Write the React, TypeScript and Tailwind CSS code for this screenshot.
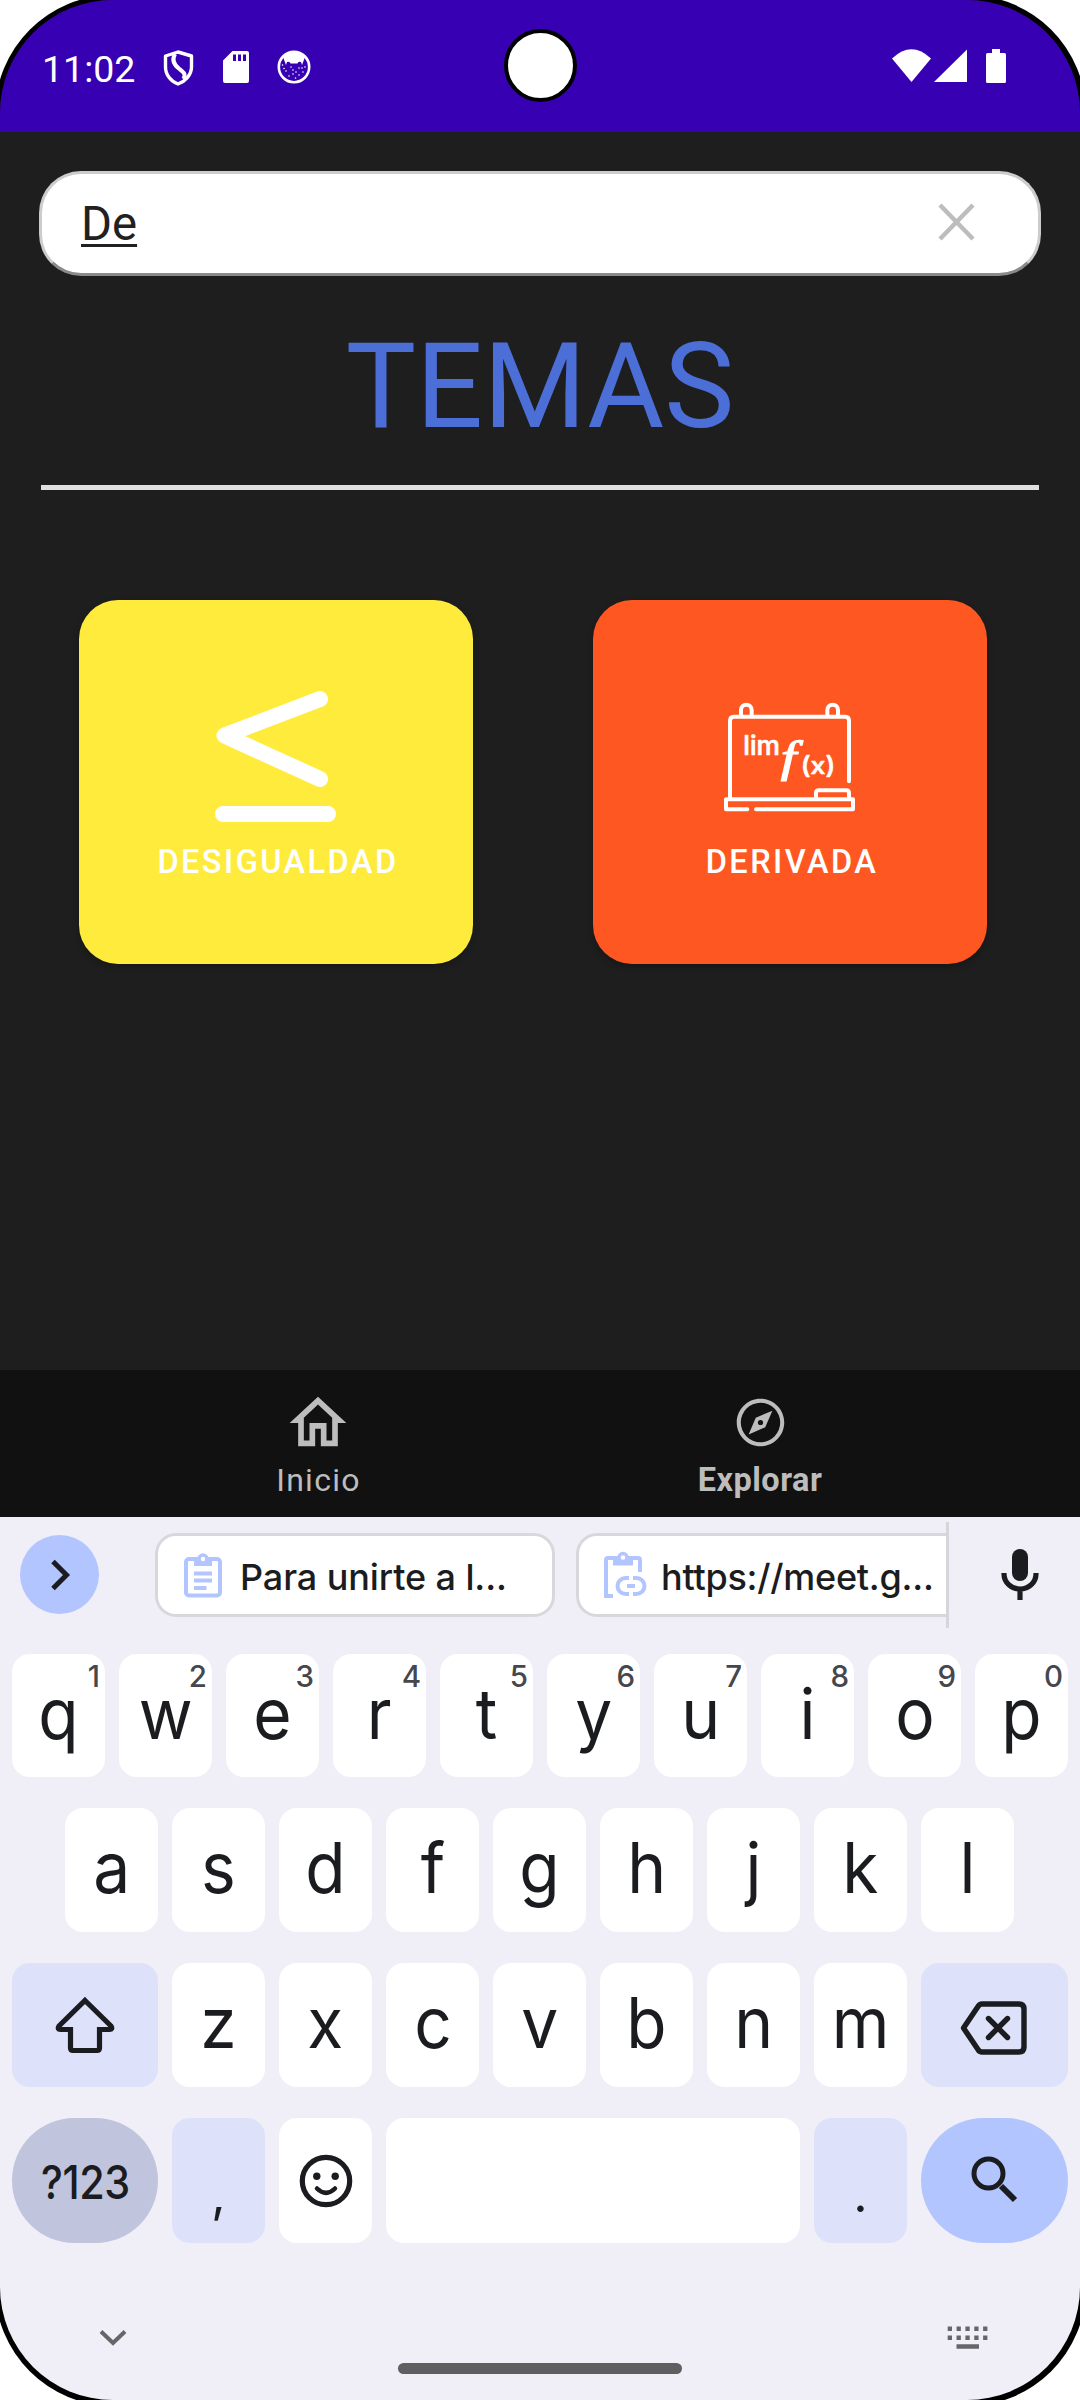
import type { ReactNode } from "react";

function StatusBar() {
  return (
    <header className="relative flex h-[132px] items-center bg-[#3700b3] text-white">
      <span className="ml-[42px] mt-[5px] w-[94px] text-[37.500px] leading-[44px] whitespace-nowrap">11:02</span>
      <svg className="mt-[3px] ml-[26px]" width="32" height="38" viewBox="0 0 32 38" fill="none" stroke="white">
        <path d="M16 3 L29.5 7 V18 C29.5 26 23 32.5 16 35 C9 32.5 3.500 26 3.500 18 V7 Z" strokeWidth="3.4" strokeLinejoin="round" />
        <path d="M13 5 C9.500 11 12 16 17.500 20 C22 23.500 24 25 21.500 30" strokeWidth="4" />
      </svg>
      <svg className="mt-[2px] ml-[29px]" width="26" height="32" viewBox="0 0 26 32" fill="white">
        <path fillRule="evenodd" d="M9.500 0H24a2 2 0 0 1 2 2V30a2 2 0 0 1-2 2H2a2 2 0 0 1-2-2V9.500ZM10 3.500V10H13V3.500ZM15 3.500V10H18V3.500ZM20 3.500V10H23V3.500Z" />
      </svg>
      <svg className="mt-[2px] ml-[28px]" width="34" height="34" viewBox="0 0 34 34">
        <circle cx="17" cy="17" r="15.200" fill="none" stroke="white" strokeWidth="2.600" />
        <path fill="white" d="M6 7 Q17 -3 28 7 L25 15 L24 12 Q21 11 20.500 13.500 H13.500 Q13 11 10 12 L9 15Z" />
        <g fill="white">
          {[[5.500, 15], [9, 21], [14, 17], [19, 22], [25, 18], [28, 17], [12, 26], [16, 24], [22, 25], [26, 22], [7, 18.500], [18.500, 28], [22, 18], [16, 20]].map(([x, y]) => (
            <circle key={`${x}-${y}`} cx={x} cy={y} r="0.800" />
          ))}
        </g>
      </svg>
      <div className="absolute top-[29px] left-[504px] size-[73px] rounded-full border-[4.500px] border-black bg-white" />
      <div className="mr-[74px] ml-auto flex h-[34px] items-start">
        <svg width="39" height="34" viewBox="0 0 39 34" fill="white">
          <path d="M0 9.500 Q19.500 -9 39 9.500 L19.500 33Z" />
        </svg>
        <svg className="ml-[3px]" width="33" height="34" viewBox="0 0 33 34" fill="white">
          <path d="M33 .5V33H0Z" />
        </svg>
        <svg className="ml-[19px]" width="20" height="34" viewBox="0 0 20 34" fill="white">
          <path d="M6 0H14V4H18.500Q20 4 20 5.500V32.500Q20 34 18.500 34H1.500Q0 34 0 32.500V5.500Q0 4 1.500 4H6Z" />
        </svg>
      </div>
    </header>
  );
}

function LessOrEqualIcon() {
  return (
    <svg className="mr-[2px]" width="121" height="131" viewBox="0 0 121 131" fill="none" stroke="white" strokeWidth="16" strokeLinecap="round" strokeLinejoin="round">
      <path d="M105 8 L9.500 44.500 L105 88M8 123H113" />
    </svg>
  );
}

function BoardIcon() {
  return (
    <svg width="132" height="110" viewBox="462 368 396 330" fill="none" stroke="white" strokeWidth="12" strokeLinecap="round" strokeLinejoin="round">
      <path d="M480 657V424Q480 412 492 412H826Q837 412 837 424V606" />
      <path d="M513 408V392a16 16 0 0 1 32 0V408M772 408V392a16 16 0 0 1 32 0V408" />
      <path d="M532 690H468V660H849V690H558" />
      <path d="M738 657V641Q738 633 746 633H829Q837 633 837 641V657" />
      <g fill="white">
        <text x="520" y="528" strokeWidth="2" className="font-['Inter'] text-[80px] font-medium" textLength="110" lengthAdjust="spacingAndGlyphs">lim</text>
        <text x="632" y="578" strokeWidth="3.500" className="font-['Liberation_Serif'] text-[130px] italic" textLength="47" lengthAdjust="spacingAndGlyphs">f</text>
        <text x="692" y="583" strokeWidth="2" className="font-['Inter'] text-[72px] font-medium" textLength="104" lengthAdjust="spacingAndGlyphs">(x)</text>
      </g>
    </svg>
  );
}

function TopicCard({ color, label, children }: { color: string; label: string; children: ReactNode }) {
  return (
    <article className={`flex h-[364px] w-[394px] flex-col items-center rounded-[39px] shadow-[0_3px_6px_rgba(0,0,0,0.25)] ${color}`}>
      <div className="flex h-[222px] w-full items-end justify-center">{children}</div>
      <h2 className="mt-[20px] pl-[4px] text-[32.500px] leading-[40px] font-medium tracking-[2.450px] text-white">{label}</h2>
    </article>
  );
}

function BottomNav() {
  return (
    <nav className="flex h-[147px] justify-between bg-[#111111] px-[258px] text-[#bdbdbd]">
      <div className="flex w-[121px] flex-col items-center">
        <svg className="mt-[18px] mr-[1px]" width="68" height="70" viewBox="0 0 24 24" preserveAspectRatio="none" fill="currentColor">
          <path d="M12 5.690l5 4.500V18h-2v-6H9v6H7v-7.810l5-4.500M12 3L2 12h3v8h6v-6h2v6h6v-8h3L12 3z" />
        </svg>
        <span className="mt-[2px] text-[32px] leading-[40px] tracking-[1.300px]">Inicio</span>
      </div>
      <div className="-mr-[2px] flex w-[128px] flex-col items-center">
        <svg className="mt-[24px]" width="57" height="57" viewBox="0 0 24 24" fill="currentColor">
          <path d="M12 2C6.480 2 2 6.480 2 12s4.480 10 10 10 10-4.480 10-10S17.520 2 12 2zm0 18.300A8.300 8.300 0 1 1 12 3.700a8.300 8.300 0 0 1 0 16.600z" />
          <path fillRule="evenodd" d="M7 17l7-3L17 7 10 10 7 17zm5-6.100a1.100 1.100 0 1 1 0 2.200 1.100 1.100 0 0 1 0-2.200z" />
        </svg>
        <span className="mt-[9px] text-[32.500px] leading-[40px] font-bold tracking-[0.500px] whitespace-nowrap">Explorar</span>
      </div>
    </nav>
  );
}

function ClipboardIcon() {
  return (
    <svg width="38" height="46" viewBox="0 0 38 46" fill="none" stroke="#b3c5ff" strokeWidth="4">
      <rect x="2" y="7" width="34" height="36.500" rx="3" />
      <path d="M10 5.500H28V14H10Z" fill="#b3c5ff" stroke="none" />
      <circle cx="19" cy="7" r="4" fill="white" strokeWidth="3.500" />
      <path d="M10 21.500H28M10 28.500H28M10 36H22.500" />
    </svg>
  );
}

function ClipboardLinkIcon() {
  return (
    <svg width="43" height="48" viewBox="0 0 43 48" fill="none" stroke="#b3c5ff" strokeWidth="4">
      <path d="M9 45H2V9Q2 7 4 7H34Q36 7 36 9V21" />
      <path d="M9 5.500H29V14.500H9Z" fill="#b3c5ff" stroke="none" />
      <circle cx="19" cy="6.500" r="4" fill="white" strokeWidth="3.500" />
      <path d="M25 27H21.500a8 8 0 0 0 0 16H25M29 27h3.500a8 8 0 0 1 0 16H29M23 35H31" />
    </svg>
  );
}

function SuggestionStrip() {
  return (
    <div className="flex h-[137px] items-start">
      <button className="mt-[18px] ml-[20px] flex size-[79px] items-center justify-center rounded-full bg-[#b3c5ff]">
        <svg className="ml-[2px]" width="24" height="32" viewBox="0 0 24 32" fill="none" stroke="#1b1c20" strokeWidth="5">
          <path d="M4 2.500 L17.500 16 L4 29.500" />
        </svg>
      </button>
      <div className="mt-[5px] ml-[56px] flex h-[106px] w-[794px] items-center overflow-hidden border-r-[3px] border-[#d5d5da] text-[#1b1c20]">
        <button className="flex h-[84px] w-[400px] shrink-0 items-center rounded-[21px] border-[3px] border-[#d8d8dc] bg-white pl-[26px]">
          <ClipboardIcon />
          <span className="mt-[4px] ml-[18px] font-['Inter'] text-[36px] font-medium tracking-[-0.100px] whitespace-nowrap">Para unirte a l...</span>
        </button>
        <button className="ml-[21px] flex h-[84px] w-[400px] shrink-0 items-center rounded-[21px] border-[3px] border-[#d8d8dc] bg-white pl-[25px]">
          <ClipboardLinkIcon />
          <span className="mt-[4px] ml-[14px] font-['Inter'] text-[36px] font-medium tracking-[-0.250px] whitespace-nowrap">https://meet.g...</span>
        </button>
      </div>
      <svg className="mt-[32px] ml-[52px]" width="38" height="51" viewBox="0 0 38 51">
        <rect x="11" y="0" width="16" height="32" rx="8" fill="#1b1c20" />
        <path d="M3 24V25a16 15 0 0 0 32 0V24M19 40V51" fill="none" stroke="#1b1c20" strokeWidth="5.200" />
      </svg>
    </div>
  );
}

function LetterKey({ letter, hint }: { letter: string; hint?: string }) {
  return (
    <button className="relative flex w-[93px] shrink-0 items-center justify-center rounded-[18px] bg-white pb-[4px] text-[70px] leading-[80px]">
      <span className="scale-x-[0.94]">{letter}</span>
      {hint && <span className="absolute top-[4px] right-[5px] text-[29.500px] leading-[36px] font-medium text-[#46474c]">{hint}</span>}
    </button>
  );
}

function Keyboard() {
  return (
    <section className="flex h-[883px] flex-col bg-[#f0eff7] font-['Inter'] text-[#1b1c20]">
      <SuggestionStrip />
      <div className="flex flex-col gap-[31px] px-[12px]">
        <div className="flex h-[123px] justify-center gap-[14px]">
          {"qwertyuiop".split("").map((c, i) => (
            <LetterKey key={c} letter={c} hint={String((i + 1) % 10)} />
          ))}
        </div>
        <div className="flex h-[124px] gap-[14px] pl-[53px]">
          {"asdfghjkl".split("").map((c) => (
            <LetterKey key={c} letter={c} />
          ))}
        </div>
        <div className="flex h-[124px] gap-[14px]">
          <button className="flex w-[146px] items-center justify-center rounded-[18px] bg-[#dde1f9]">
            <svg width="60" height="58" viewBox="0 0 60 58" fill="none" stroke="#1b1c20" strokeWidth="5.200">
              <path d="M30 4.500 L56 30 Q58 33.500 54.500 33.500 H44.500 V52 Q44.500 54.500 42 54.500 H18 Q15.500 54.500 15.500 52 V33.500 H5.500 Q2 33.500 4 30 Z" />
            </svg>
          </button>
          {"zxcvbnm".split("").map((c) => (
            <LetterKey key={c} letter={c} />
          ))}
          <button className="flex flex-1 items-center justify-center rounded-[18px] bg-[#dde1f9] pt-[5px] pr-[2px]">
            <svg width="68" height="54" viewBox="0 0 68 54" fill="none" stroke="#1b1c20" strokeWidth="5.400" strokeLinejoin="round" strokeLinecap="round">
              <path d="M3.500 27 L18 5.500 Q19.500 3 22 3 H59 Q64 3 64 8 V46 Q64 51 59 51 H22 Q19.500 51 18 48.500 Z" />
              <path d="M28.500 17.500 L47.500 36.500 M47.500 17.500 L28.500 36.500" />
            </svg>
          </button>
        </div>
        <div className="flex h-[125px] gap-[14px]">
          <button className="flex w-[146px] items-center justify-center rounded-full bg-[#c0c5dd] pt-[3px] text-[47px] font-medium">
            <span className="scale-x-[0.88] tracking-[-0.500px]">?123</span>
          </button>
          <button className="flex w-[93px] items-center justify-center rounded-[18px] bg-[#dde1f9] pt-[26px] text-[50px] leading-[60px]">,</button>
          <button className="flex w-[93px] items-center justify-center rounded-[18px] bg-white">
            <svg width="54" height="54" viewBox="0 0 54 54" fill="none" stroke="#1b1c20" strokeWidth="5.200" strokeLinecap="round">
              <circle cx="27" cy="27" r="23.700" />
              <circle cx="17.800" cy="22.300" r="3.700" fill="#1b1c20" stroke="none" />
              <circle cx="36.200" cy="22.300" r="3.700" fill="#1b1c20" stroke="none" />
              <path d="M18 34.500 Q27 43.500 36 34.500" strokeWidth="4.500" />
            </svg>
          </button>
          <button className="w-[414px] rounded-[18px] bg-white" />
          <button className="flex w-[93px] items-center justify-center rounded-[18px] bg-[#dde1f9] pt-[26px] text-[50px] leading-[60px]">.</button>
          <button className="flex flex-1 items-center justify-center rounded-full bg-[#b3c5ff] pr-[2px] pb-[4px]">
            <svg width="48" height="48" viewBox="0 0 48 48" fill="none" stroke="#1b1c20">
              <circle cx="18.500" cy="18.500" r="14.500" strokeWidth="5" />
              <path d="M31 31 L45 45" strokeWidth="6" />
            </svg>
          </button>
        </div>
      </div>
      <footer className="mt-[82px] flex items-start">
        <svg className="mt-[4px] ml-[99px]" width="28" height="18" viewBox="0 0 28 18" fill="none" stroke="#666668" strokeWidth="4">
          <path d="M2 2.500 L14 14 L26 2.500" />
        </svg>
        <div className="mt-[38px] ml-[271px] h-[11px] w-[284px] rounded-full bg-[#5f5f61]" />
        <svg className="mt-px ml-[265px]" width="42" height="24" viewBox="0 0 42 24" fill="#666668">
          {[0, 1, 2, 3, 4].map((i) => (
            <path key={i} d={`M${0.7 + i * 8.85} 0.500h4.300v4.500h-4.300zM${0.7 + i * 8.85} 9.500h4.300v4.500h-4.300z`} />
          ))}
          <path d="M9.500 18.300H32V22.800H9.500Z" />
        </svg>
      </footer>
    </section>
  );
}

export default function App() {
  return (
    <div className="relative h-[2400px] w-[1080px] overflow-hidden bg-white font-['Roboto',sans-serif]">
      <div className="absolute -inset-[5.500px] rounded-[118.500px] bg-black" />
      <div className="relative flex h-full flex-col overflow-hidden rounded-[113px] bg-[#1e1e1e]">
        <StatusBar />
        <main className="flex flex-1 flex-col">
          <div className="mx-[39px] mt-[39px] flex h-[105px] items-center rounded-[42px] border-[3px] border-[#cccccc] border-b-[#8a8a8a] bg-white">
            <span className="ml-[39px] text-[47.250px] leading-[56px] text-[#212121] underline decoration-[2.500px] underline-offset-[4px]">De</span>
            <svg className="mr-[63px] mb-[3px] ml-auto" width="37" height="38" viewBox="0 0 37 38" fill="none" stroke="#bdbdbd" strokeWidth="4.500">
              <path d="M2 2 L35 36 M35 2 L2 36" />
            </svg>
          </div>
          <h1 className="mt-[42px] text-center text-[118px] leading-[138px] text-[#4c6ed7]">TEMAS</h1>
          <hr className="mx-[41px] mt-[29px] h-[5px] border-0 bg-[#e0e0e0]" />
          <div className="mt-[110px] flex justify-between pr-[93px] pl-[79px]">
            <TopicCard color="bg-[#ffeb3b]" label="DESIGUALDAD">
              <LessOrEqualIcon />
            </TopicCard>
            <TopicCard color="bg-[#ff5722]" label="DERIVADA">
              <div className="pb-[10px]">
                <BoardIcon />
              </div>
            </TopicCard>
          </div>
        </main>
        <BottomNav />
        <Keyboard />
      </div>
    </div>
  );
}
